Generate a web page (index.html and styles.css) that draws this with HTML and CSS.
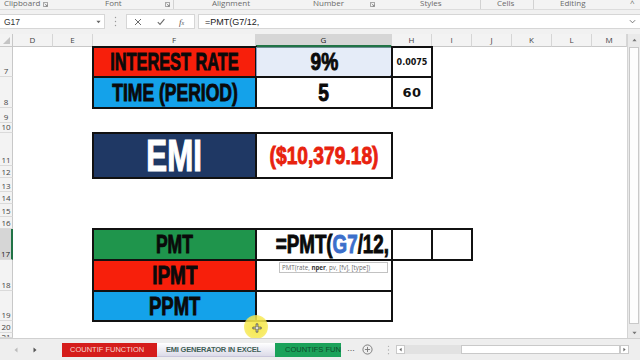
FILE: index.html
```html
<!DOCTYPE html>
<html>
<head>
<meta charset="utf-8">
<link rel="stylesheet" href="styles.css">
</head>
<body>
<div class="app">
  <div class="ribbon">
    <span class="ri w-clip">Clipboard</span>
    <span class="ri w-l1"><svg class="lnch" viewBox="0 0 6 6"><path d="M0.5 0.5H5.5V5.5H0.5Z M2 2L5 5 M5 3V5H3" fill="none" stroke="#777" stroke-width="0.8"/></svg></span>
    <span class="ri w-font">Font</span>
    <span class="ri w-l2"><svg class="lnch" viewBox="0 0 6 6"><path d="M0.5 0.5H5.5V5.5H0.5Z M2 2L5 5 M5 3V5H3" fill="none" stroke="#777" stroke-width="0.8"/></svg></span>
    <span class="ri w-sep1"><i class="rsep"></i></span>
    <span class="ri w-align">Alignment</span>
    <span class="ri w-num">Number</span>
    <span class="ri w-l3"><svg class="lnch" viewBox="0 0 6 6"><path d="M0.5 0.5H5.5V5.5H0.5Z M2 2L5 5 M5 3V5H3" fill="none" stroke="#777" stroke-width="0.8"/></svg></span>
    <span class="ri w-sty">Styles</span>
    <span class="ri w-sep2"><i class="rsep"></i></span>
    <span class="ri w-cells">Cells</span>
    <span class="ri w-sep3"><i class="rsep"></i></span>
    <span class="ri w-edit">Editing</span>
    <span class="ri w-col">^</span>
  </div>

  <div class="fbar">
    <div class="namebox"><span class="nbtxt">G17</span><svg class="nbdd" viewBox="0 0 6 4"><path d="M0.5 0.5H5.5L3 3.5Z" fill="#666"/></svg></div>
    <div class="fsep"><svg viewBox="0 0 3 11" class="vdots"><circle cx="1.5" cy="1.5" r="0.7" fill="#999"/><circle cx="1.5" cy="5.5" r="0.7" fill="#999"/><circle cx="1.5" cy="9.5" r="0.7" fill="#999"/></svg></div>
    <div class="fxbox">
      <svg class="ficon" viewBox="0 0 8 8"><path d="M1 1L7 7M7 1L1 7" stroke="#6b6b6b" stroke-width="1"/></svg>
      <svg class="ficon" viewBox="0 0 8 8"><path d="M0.8 4.2L3 6.4L7.4 1.2" fill="none" stroke="#6b6b6b" stroke-width="1.1"/></svg>
      <span class="fx">f<span class="fxs">x</span></span>
    </div>
    <div class="finput"><span class="ftxt">=PMT(G7/12,</span><svg class="fchev" viewBox="0 0 8 5"><path d="M1 1L4 4L7 1" fill="none" stroke="#666" stroke-width="1"/></svg></div>
  </div>

  <div class="sheetwrap">
    <div class="sheet">
      <div class="corner"><svg class="sall" viewBox="0 0 8 8"><path d="M8 0V8H0Z" fill="#c4c4c4"/></svg></div>
      <div class="ch">D</div>
      <div class="ch">E</div>
      <div class="ch">F</div>
      <div class="ch ch-sel">G</div>
      <div class="ch">H</div>
      <div class="ch">I</div>
      <div class="ch">J</div>
      <div class="ch">K</div>
      <div class="ch">L</div>
      <div class="ch">M</div>

      <div class="rh">7</div>
      <div class="rh">8</div>
      <div class="rh">9</div>
      <div class="rh">10</div>
      <div class="rh">11</div>
      <div class="rh">12</div>
      <div class="rh">13</div>
      <div class="rh">14</div>
      <div class="rh">15</div>
      <div class="rh">16</div>
      <div class="rh rh-sel">17</div>
      <div class="rh">18</div>
      <div class="rh">19</div>
      <div class="rh">20</div>
      <div class="rh rh-cut">21</div>

      <div class="bx c-f7 red"><span class="imp big s68">INTEREST RATE</span></div>
      <div class="c-g7 ref"><span class="imp big s80">9%</span><i class="refdot"></i></div>
      <div class="bx c-h7"><span class="small">0.0075</span></div>
      <div class="bx c-f8 blue"><span class="imp big s73">TIME (PERIOD)</span></div>
      <div class="bx c-g8"><span class="imp big s80">5</span></div>
      <div class="bx c-h8"><span class="mid">60</span></div>

      <div class="bx c-emi navy"><span class="imp huge s71">EMI</span></div>
      <div class="bx c-emiv"><span class="imp big redtxt s80">($10,379.18)</span></div>

      <div class="bx c-f17 green"><span class="imp big2 s70">PMT</span></div>
      <div class="bx c-g17"><span class="imp big2 s75">=PMT(<span class="reftxt">G7</span>/12,</span><i class="caret"></i></div>
      <div class="bx c-h17"></div>
      <div class="bx c-i17"></div>
      <div class="bx c-f18 red"><span class="imp big2 s76">IPMT</span></div>
      <div class="bx c-g18"><div class="tip">PMT(rate, <b>nper</b>, pv, [fv], [type])</div></div>
      <div class="bx c-f19 blue"><span class="imp big2 s74">PPMT</span></div>
      <div class="bx c-g19"></div>

      <div class="cursor"><svg viewBox="0 0 12 12" class="curs"><path d="M5 1H7V5H11V7H7V11H5V7H1V5H5Z" fill="#fff" stroke="#222" stroke-width="0.8"/></svg></div>
    </div>
    <div class="vscroll">
      <div class="va"><svg viewBox="0 0 6 4" class="arr"><path d="M0.5 3.5H5.5L3 0.5Z" fill="#777"/></svg></div>
      <div class="vthumb"></div>
      <div class="va"><svg viewBox="0 0 6 4" class="arr"><path d="M0.5 0.5H5.5L3 3.5Z" fill="#777"/></svg></div>
    </div>
  </div>

  <div class="tabbar">
    <div class="tnav">
      <svg viewBox="0 0 4 6" class="tarr"><path d="M3.5 0.5V5.5L0.5 3Z" fill="#bbb"/></svg>
      <svg viewBox="0 0 4 6" class="tarr"><path d="M0.5 0.5V5.5L3.5 3Z" fill="#555"/></svg>
    </div>
    <div class="tab t-red">COUNTIF FUNCTION</div>
    <div class="tab t-act">EMI GENERATOR IN EXCEL</div>
    <div class="tab t-grn">COUNTIFS FUN</div>
    <span class="tmore">...</span>
    <svg class="tadd" viewBox="0 0 12 12"><circle cx="6" cy="6" r="5" fill="none" stroke="#777" stroke-width="1"/><path d="M6 3.2V8.8M3.2 6H8.8" stroke="#777" stroke-width="1"/></svg>
    <svg viewBox="0 0 3 11" class="tdots"><circle cx="1.5" cy="1.5" r="0.7" fill="#aaa"/><circle cx="1.5" cy="5.5" r="0.7" fill="#aaa"/><circle cx="1.5" cy="9.5" r="0.7" fill="#aaa"/></svg>
    <div class="hscroll">
      <div class="ha"><svg viewBox="0 0 4 6" class="harr"><path d="M3.5 0.5V5.5L0.5 3Z" fill="#666"/></svg></div>
      <div class="htrack"></div>
      <div class="hthumb"></div>
      <div class="ha"><svg viewBox="0 0 4 6" class="harr"><path d="M0.5 0.5V5.5L3.5 3Z" fill="#666"/></svg></div>
    </div>
  </div>
</div>
</body>
</html>
```

FILE: styles.css
```css
* { box-sizing: border-box; margin: 0; padding: 0; }
html, body { width: 640px; height: 360px; overflow: hidden; background: #f1f1f1; }
body { font-family: "Liberation Sans", Arial, sans-serif; }

.app { width: 640px; height: 360px; display: flex; flex-direction: column; background: #f1f1f1; }

/* ribbon group labels (cut off at top) */
.ribbon { height: 9px; flex: none; display: flex; overflow: hidden; padding-left: 4px; background: #f3f3f3; font-family: "Open Sans", "Noto Sans", sans-serif; font-size: 8px; color: #6a6a6a; }
.ri { flex: none; line-height: 10px; margin-top: -3px; white-space: nowrap; display: flex; align-items: center; }
.lnch { width: 5px; height: 5px; margin-top: 3px; }
.rsep { display: block; width: 1px; height: 12px; background: #d2d2d2; margin-top: 2px; }
.w-clip { width: 39px; }
.w-l1 { width: 62px; }
.w-font { width: 60px; }
.w-l2 { width: 8px; }
.w-sep1 { width: 39px; }
.w-align { width: 101px; }
.w-num { width: 57px; }
.w-l3 { width: 50px; }
.w-sty { width: 60px; }
.w-sep2 { width: 17px; }
.w-cells { width: 36px; }
.w-sep3 { width: 27px; }
.w-edit { width: 70px; }
.w-col { width: 10px; }

/* formula bar */
.fbar { height: 25px; flex: none; display: flex; padding-top: 4px; padding-bottom: 6px; background: #f1f1f1; border-top: 1px solid #dcdcdc; }
.namebox { width: 105px; height: 15px; background: #fff; border: 1px solid #d6d6d6; border-left: none; display: flex; align-items: center; justify-content: space-between; padding: 0 3px 0 4px; }
.nbtxt { font-size: 8.5px; color: #333; }
.nbdd { width: 5px; height: 4px; }
.fsep { width: 21px; display: flex; align-items: center; justify-content: center; }
.vdots { width: 3px; height: 11px; }
.fxbox { width: 69px; height: 15px; background: #fff; border: 1px solid #d6d6d6; display: flex; align-items: center; padding-left: 7px; gap: 0; }
.ficon { width: 8px; height: 8px; margin-right: 15px; }
.fx { font-family: "Liberation Serif", serif; font-style: italic; font-size: 9px; color: #555; margin-left: -1px; }
.fxs { font-size: 6px; }
.finput { flex: 1; margin-left: 3px; height: 15px; background: #fff; border: 1px solid #d6d6d6; border-right: none; display: flex; align-items: center; justify-content: space-between; padding: 0 4px 0 6px; }
.ftxt { font-size: 9px; color: #222; }
.fchev { width: 7px; height: 5px; }

/* sheet */
.sheetwrap { height: 304px; flex: none; display: flex; background: #fff; }
.sheet { position: relative; width: 627px; height: 304px; display: grid;
  grid-template-columns: 13px 40px 40px 163px 136px 40px 40px 40px 40px 40px 35px;
  grid-template-rows: 13px 30px 31px 15px 10px 33px 12px 14px 12px 13px 12px 31px 31px 30px 12px 5px;
  overflow: hidden; }

.corner { grid-row: 1; grid-column: 1; background: #f3f3f3; border-right: 1px solid #c8c8c8; border-bottom: 1px solid #c8c8c8; display: flex; align-items: flex-end; justify-content: flex-end; padding: 0 2px 2px 0; }
.sall { width: 7px; height: 7px; }
.ch { grid-row: 1; background: #f3f3f3; border-right: 1px solid #d6d6d6; border-bottom: 1px solid #c8c8c8; font-family: "Open Sans", "Noto Sans", sans-serif; font-size: 8px; color: #444; display: flex; align-items: center; justify-content: center; line-height: 1; }
.ch-sel { background: #d6d6d6; border-bottom: 2px solid #217346; color: #222; }
.rh { grid-column: 1; background: #f3f3f3; border-right: 1px solid #c8c8c8; border-bottom: 1px solid #dadada; font-family: "Open Sans", "Noto Sans", sans-serif; font-size: 8px; color: #444; display: flex; align-items: flex-end; justify-content: center; padding-bottom: 1px; line-height: 1; overflow: hidden; }
.rh-sel { background: #d6d6d6; border-right: 2px solid #217346; color: #222; }
.rh-cut { align-items: flex-start; padding-top: 0; }

/* bordered cells */
.bx { border: 1px solid #111; box-shadow: 0 0 0 1px #111; display: flex; align-items: center; justify-content: center; background: #fff; position: relative; }
.red { background: #f71f0b; }
.blue { background: #14a2ea; }
.green { background: #1f954c; }
.navy { background: #1f3864; }

.c-f7 { grid-area: 2 / 4; }
.c-g7 { grid-area: 2 / 5; }
.c-h7 { grid-area: 2 / 6; }
.c-f8 { grid-area: 3 / 4; }
.c-g8 { grid-area: 3 / 5; }
.c-h8 { grid-area: 3 / 6; }
.c-emi { grid-area: 6 / 4 / 8 / 5; }
.c-emiv { grid-area: 6 / 5 / 8 / 6; }
.c-f17 { grid-area: 12 / 4; }
.c-g17 { grid-area: 12 / 5; }
.c-h17 { grid-area: 12 / 6; }
.c-i17 { grid-area: 12 / 7; }
.c-f18 { grid-area: 13 / 4; }
.c-g18 { grid-area: 13 / 5; }
.c-f19 { grid-area: 14 / 4; }
.c-g19 { grid-area: 14 / 5; }

.ref { background: #e5ecf8; border: 1px solid #7f99c4; border-top-color: #6f8f94; display: flex; align-items: center; justify-content: center; position: relative; }
.refdot { position: absolute; right: -3px; bottom: -3px; width: 4px; height: 4px; background: #7f99c4; }

.imp { font-family: "Liberation Sans Narrow", "Liberation Sans", sans-serif; font-weight: 700; color: #0a0a0a; display: inline-block; white-space: nowrap; line-height: 1; -webkit-text-stroke: 0.9px currentColor; transform-origin: center; }
.big { font-size: 24px; }
.big2 { font-size: 25px; }
.huge { font-size: 44px; color: #fff; -webkit-text-stroke: 1.2px #fff; }
.redtxt { color: #e8220e; }
.reftxt { color: #3c6fcb; }
.s68 { transform: scaleX(0.68); }
.s70 { transform: scaleX(0.70); }
.s71 { transform: scaleX(0.71); }
.s73 { transform: scaleX(0.73); }
.s74 { transform: scaleX(0.74); }
.s75 { transform: scaleX(0.75); }
.s76 { transform: scaleX(0.76); }
.s80 { transform: scaleX(0.80); }

.small { font-family: "DejaVu Sans", sans-serif; font-weight: 700; font-size: 8px; color: #111; }
.mid { font-family: "DejaVu Sans", sans-serif; font-weight: 700; font-size: 13px; color: #111; letter-spacing: 0.5px; }

.c-g17 { justify-content: center; }
.caret { display: inline-block; width: 1px; height: 24px; background: #111; margin-left: -16px; }

.tip { position: absolute; left: 22px; top: 1px; width: 109px; height: 11px; background: #fff; border: 1px solid #c2c2c2; font-family: "Open Sans", "Noto Sans", sans-serif; font-size: 6.2px; color: #6a6a6a; line-height: 9px; padding-left: 2px; white-space: nowrap; }
.tip b { color: #333; }

.cursor { position: absolute; left: 244px; top: 281px; width: 24px; height: 24px; border-radius: 50%; background: radial-gradient(circle, rgba(246,232,70,0.95) 0%, rgba(246,232,80,0.85) 60%, rgba(246,232,90,0.5) 100%); display: flex; align-items: center; justify-content: center; }
.curs { width: 10px; height: 10px; margin-left: 1px; margin-top: 2px; }

/* vertical scrollbar */
.vscroll { width: 13px; background: #eaeaea; border-left: 1px solid #d4d4d4; display: flex; flex-direction: column; align-items: center; }
.va { height: 11px; width: 100%; display: flex; align-items: center; justify-content: center; }
.arr { width: 5px; height: 4px; }
.vthumb { flex: 1; width: 10px; margin: 2px 0 3px; background: #fdfdfd; border: 1px solid #c9c9c9; }

/* sheet tabs */
.tabbar { height: 22px; flex: none; display: flex; align-items: center; background: #eeeeee; border-top: 1px solid #d0d0d0; }
.tnav { width: 62px; display: flex; align-items: center; padding-left: 14px; gap: 15px; }
.tarr { width: 4px; height: 6px; }
.tab { height: 14px; display: flex; align-items: center; font-size: 7.5px; white-space: nowrap; overflow: hidden; }
.t-red { width: 95px; background: #d51d1b; color: #f7d6cf; padding-left: 8px; }
.t-act { width: 118px; background: linear-gradient(#ffffff, #dcdbe9); color: #3f5f56; padding-left: 9px; font-weight: 700; letter-spacing: -0.2px; border-bottom: 1px solid #c9c6db; }
.t-grn { width: 66px; background: #1ba25a; color: #0f4b2b; padding-left: 10px; }
.tmore { width: 20px; text-align: center; font-size: 9px; color: #555; margin-top: -3px; }
.tadd { width: 11px; height: 11px; margin-left: 1px; }
.tdots { width: 3px; height: 10px; margin-left: 14px; }
.hscroll { width: 233px; height: 9px; margin-left: 6px; display: flex; align-items: stretch; }
.ha { width: 9px; display: flex; align-items: center; justify-content: center; border: 1px solid #c9c9c9; background: #fff; }
.harr { width: 3px; height: 5px; }
.htrack { width: 56px; background: #e2e2e2; }
.hthumb { flex: 1; background: #fff; border: 1px solid #c9c9c9; }
```
